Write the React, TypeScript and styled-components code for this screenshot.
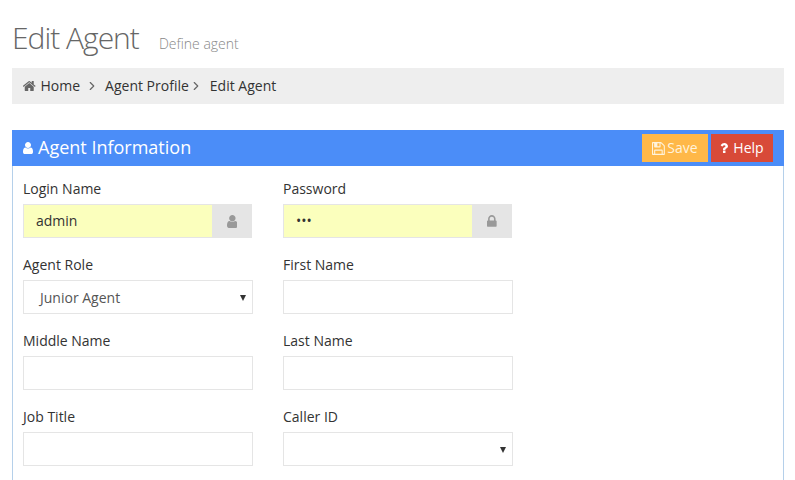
import React from "react";
import styled, { createGlobalStyle } from "styled-components";
import { ChevronRight } from "lucide-react";

const GlobalStyle = createGlobalStyle`
  html, body {
    margin: 0;
    padding: 0;
    background: #ffffff;
    overflow: hidden;
  }
  body {
    font-family: "Open Sans", "Liberation Sans", sans-serif;
    font-size: 14px;
    color: #333333;
  }
`;

// Font Awesome 4 shapes, viewBox cropped to the width of each glyph
const glyphs = {
  home: {
    x: 97,
    w: 1600,
    d: "M1472 992v480q0 26-19 45t-45 19h-384v-384h-256v384h-384q-26 0-45-19t-19-45v-480q0-1 .5-3t.5-3l575-474 575 474q1 2 1 6zm223-69l-62 74q-8 9-21 11h-3q-13 0-21-7l-692-577-692 577q-12 8-24 7-13-2-21-11l-62-74q-8-10-7-23.5t11-21.5l719-599q32-26 76-26t76 26l244 204v-195q0-14 9-23t23-9h192q14 0 23 9t9 23v408l219 182q10 8 11 21.5t-7 23.5z",
  },
  user: {
    x: 256,
    w: 1280,
    d: "M1536 1399q0 109-62.5 187t-150.5 78h-854q-88 0-150.5-78t-62.5-187q0-85 8.5-160.5t31.5-152 58.5-131 94-89 134.5-34.5q131 128 313 128t313-128q76 0 134.5 34.5t94 89 58.5 131 31.5 152 8.5 160.5zm-256-887q0 159-112.5 271.5t-271.5 112.5-271.5-112.5-112.5-271.5 112.5-271.5 271.5-112.5 271.5 112.5 112.5 271.5z",
  },
  lock: {
    x: 320,
    w: 1152,
    d: "M640 768h512v-192q0-106-75-181t-181-75-181 75-75 181v192zm832 96v576q0 40-28 68t-68 28h-960q-40 0-68-28t-28-68v-576q0-40 28-68t68-28h32v-192q0-184 132-316t316-132 316 132 132 316v192h32q40 0 68 28t28 68z",
  },
  save: {
    x: 128,
    w: 1536,
    d: "M512 1536h768v-384h-768v384zm896 0h128v-896q0-14-10-38.5t-20-34.5l-281-281q-10-10-34-20t-39-10v416q0 40-28 68t-68 28h-576q-40 0-68-28t-28-68v-416h-128v1280h128v-416q0-40 28-68t68-28h832q40 0 68 28t28 68v416zm-384-928v-320q0-13-9.5-22.5t-22.5-9.5h-192q-13 0-22.5 9.5t-9.5 22.5v320q0 13 9.5 22.5t22.5 9.5h192q13 0 22.5-9.5t9.5-22.5zm640 32v928q0 40-28 68t-68 28h-1344q-40 0-68-28t-28-68v-1344q0-40 28-68t68-28h928q40 0 88 20t76 48l280 280q28 28 48 76t20 88z",
  },
  question: {
    x: 388,
    w: 1020,
    d: "M1088 1256v240q0 16-12 28t-28 12h-240q-16 0-28-12t-12-28v-240q0-16 12-28t28-12h240q16 0 28 12t12 28zm316-600q0 54-15.5 101t-35 76.5-55 59.5-57.5 43.5-61 35.5q-41 23-68.5 65t-27.5 67q0 17-12 32.5t-28 15.5h-240q-15 0-25.5-18.5t-10.5-37.5v-45q0-83 65-156.5t143-108.5q59-27 84-56t25-76q0-42-46.5-74t-107.5-32q-65 0-108 29-35 25-107 115-13 16-31 16-12 0-25-8l-164-125q-13-10-15.5-25t5.5-28q160-266 464-266 80 0 161 31t146 83 106 127.5 41 158.5z",
  },
};

const Glyph: React.FC<{ name: keyof typeof glyphs; size: number }> = ({ name, size }) => {
  const g = glyphs[name];
  return (
    <svg
      width={(g.w / 1792) * size}
      height={size}
      viewBox={`${g.x} 0 ${g.w} 1792`}
      fill="currentColor"
    >
      <path d={g.d} />
    </svg>
  );
};

const Page = styled.div`
  width: 795px;
  height: 480px;
  box-sizing: border-box;
  padding: 0 11px 0 12px;
  overflow: hidden;
`;

const PageHeader = styled.div`
  display: flex;
  align-items: baseline;
  height: 68px;
  box-sizing: border-box;
  padding-top: 17px;
`;

const Title = styled.h1`
  margin: 0;
  font-size: 30px;
  line-height: 42px;
  font-weight: 300;
  color: #666666;
  letter-spacing: -1px;
`;

const Subtitle = styled.small`
  margin-left: 20px;
  font-size: 14px;
  font-weight: 300;
  color: #888888;
`;

const Breadcrumb = styled.div`
  display: flex;
  align-items: center;
  height: 36px;
  box-sizing: border-box;
  padding: 0 0 2px 11px;
  background: #eeeeee;
  color: #333333;
  font-size: 14px;
  margin-bottom: 26px;
`;

const Crumb = styled.span`
  display: flex;
  align-items: center;
  gap: 5px;
  svg {
    color: #666666;
    margin-top: 2px;
  }
`;

const CrumbSep = styled(ChevronRight)<{ $left: number; $right: number }>`
  color: #666666;
  margin: 2px ${(p) => p.$right}px 0 ${(p) => p.$left}px;
`;

const Panel = styled.section`
  border: 1px solid #b5d0ea;
  border-top: 0;
  height: 400px;
`;

const PanelHeader = styled.div`
  display: flex;
  align-items: center;
  justify-content: space-between;
  height: 36px;
  margin: 0 -1px;
  padding: 0 11px 0 11px;
  background: #4b8df8;
  color: #ffffff;
`;

const PanelTitle = styled.div`
  display: flex;
  align-items: center;
  gap: 5px;
  font-size: 18px;
  padding-bottom: 2px;
  svg {
    margin-top: 2px;
  }
`;

const Actions = styled.div`
  display: flex;
  gap: 3px;
`;

const ActionButton = styled.button<{ $bg: string; $fg: string; $width: number; $gap: number }>`
  display: flex;
  align-items: center;
  justify-content: center;
  gap: ${(p) => p.$gap}px;
  height: 28px;
  width: ${(p) => p.$width}px;
  padding: 0 0 2px;
  border: 0;
  background: ${(p) => p.$bg};
  color: ${(p) => p.$fg};
  font-family: inherit;
  font-size: 14px;
  svg {
    margin-top: 2px;
  }
`;

const FormGrid = styled.div`
  display: grid;
  grid-template-columns: 230px 230px;
  column-gap: 30px;
  row-gap: 17px;
  padding: 13px 10px 0;
`;

const Field = styled.div`
  display: flex;
  flex-direction: column;
`;

const Label = styled.label`
  height: 25px;
  line-height: 20px;
  font-size: 14px;
  color: #333333;
`;

const InputGroup = styled.div`
  display: flex;
  height: 34px;
  width: 229px;
`;

const Input = styled.input<{ $filled?: boolean; $grow?: boolean }>`
  flex: ${(p) => (p.$grow ? "1" : "none")};
  min-width: 0;
  height: 34px;
  box-sizing: border-box;
  padding: 0 12px 2px;
  border: 1px solid #e5e5e5;
  border-radius: 0;
  outline: none;
  background: ${(p) => (p.$filled ? "#fbffbd" : "#ffffff")};
  color: #333333;
  font-family: inherit;
  font-size: 14px;
`;

const Addon = styled.span`
  display: flex;
  align-items: center;
  justify-content: center;
  width: 39px;
  padding-right: 1px;
  box-sizing: border-box;
  background: #e5e5e5;
  color: #999999;
`;

const SelectBox = styled.div`
  position: relative;
  height: 34px;
  box-sizing: border-box;
  display: flex;
  align-items: center;
  padding: 0 16px;
  border: 1px solid #e5e5e5;
  color: #555555;
  font-size: 14px;
  &::after {
    content: "";
    position: absolute;
    right: 6px;
    top: 14px;
    border-left: 3px solid transparent;
    border-right: 3px solid transparent;
    border-top: 6px solid #333333;
  }
`;

const App: React.FC = () => {
  return (
    <Page>
      <GlobalStyle />
      <PageHeader>
        <Title>Edit Agent</Title>
        <Subtitle>Define agent</Subtitle>
      </PageHeader>
      <Breadcrumb>
        <Crumb>
          <Glyph name="home" size={14} />
          Home
        </Crumb>
        <CrumbSep size={14} $left={5} $right={6} />
        <Crumb>Agent Profile</Crumb>
        <CrumbSep size={14} $left={0} $right={7} />
        <Crumb>Edit Agent</Crumb>
      </Breadcrumb>
      <Panel>
        <PanelHeader>
          <PanelTitle>
            <Glyph name="user" size={14} />
            Agent Information
          </PanelTitle>
          <Actions>
            <ActionButton $bg="#ffb848" $fg="#fff3dc" $width={66} $gap={2}>
              <Glyph name="save" size={15} />
              Save
            </ActionButton>
            <ActionButton $bg="#d84a38" $fg="#ffffff" $width={62} $gap={5}>
              <Glyph name="question" size={14} />
              Help
            </ActionButton>
          </Actions>
        </PanelHeader>
        <FormGrid>
          <Field>
            <Label>Login Name</Label>
            <InputGroup>
              <Input $filled $grow readOnly value="admin" />
              <Addon>
                <Glyph name="user" size={15} />
              </Addon>
            </InputGroup>
          </Field>
          <Field>
            <Label>Password</Label>
            <InputGroup>
              <Input $filled $grow readOnly type="password" value="abc" />
              <Addon>
                <Glyph name="lock" size={15} />
              </Addon>
            </InputGroup>
          </Field>
          <Field>
            <Label>Agent Role</Label>
            <SelectBox>Junior Agent</SelectBox>
          </Field>
          <Field>
            <Label>First Name</Label>
            <Input readOnly />
          </Field>
          <Field>
            <Label>Middle Name</Label>
            <Input readOnly />
          </Field>
          <Field>
            <Label>Last Name</Label>
            <Input readOnly />
          </Field>
          <Field>
            <Label>Job Title</Label>
            <Input readOnly />
          </Field>
          <Field>
            <Label>Caller ID</Label>
            <SelectBox />
          </Field>
        </FormGrid>
      </Panel>
    </Page>
  );
};

export default App;
